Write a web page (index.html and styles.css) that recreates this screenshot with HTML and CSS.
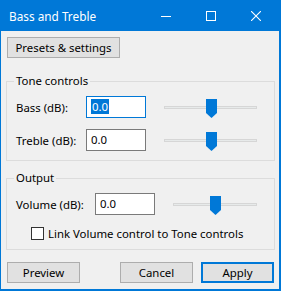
FILE: index.html
```html
<!DOCTYPE html>
<html lang="en">
<head>
  <meta charset="UTF-8" />
  <title>Bass and Treble</title>
  <link rel="stylesheet" href="styles.css">
</head>
<body>
  <div class="window">
    <div class="titlebar">
      <span class="title">Bass and Treble</span>
      <div class="caption">
        <span class="cap"><svg width="10" height="10" viewBox="0 0 10 10"><path d="M0 5.5H10" stroke="#fff" stroke-width="1"/></svg></span>
        <span class="cap"><svg width="10" height="10" viewBox="0 0 10 10"><rect x="0.5" y="0.5" width="9" height="9" fill="none" stroke="#fff" stroke-width="1"/></svg></span>
        <span class="cap close"><svg width="10" height="10" viewBox="0 0 10 10"><path d="M0 0L10 10M10 0L0 10" stroke="#fff" stroke-width="1.1"/></svg></span>
      </div>
    </div>

    <div class="content">
      <button class="btn presets">Presets &amp; settings</button>

      <fieldset class="group">
        <legend>Tone controls</legend>
        <div class="rows">
          <div class="row">
            <span class="lbl">Bass (dB):</span>
            <div class="field focused"><span class="sel">0.0</span></div>
            <div class="slider">
              <div class="track"></div>
              <svg class="thumb" width="11" height="19" viewBox="0 0 11 19"><polygon points="0,0 11,0 11,14 5.5,19 0,14" fill="#0078d7"/></svg>
            </div>
          </div>
          <div class="row">
            <span class="lbl">Treble (dB):</span>
            <div class="field">0.0</div>
            <div class="slider">
              <div class="track"></div>
              <svg class="thumb" width="11" height="19" viewBox="0 0 11 19"><polygon points="0,0 11,0 11,14 5.5,19 0,14" fill="#0078d7"/></svg>
            </div>
          </div>
        </div>
      </fieldset>

      <fieldset class="group output">
        <legend>Output</legend>
        <div class="rows">
          <div class="row">
            <span class="lbl wide">Volume (dB):</span>
            <div class="field">0.0</div>
            <div class="slider short">
              <div class="track"></div>
              <svg class="thumb" width="11" height="19" viewBox="0 0 11 19"><polygon points="0,0 11,0 11,14 5.5,19 0,14" fill="#0078d7"/></svg>
            </div>
          </div>
          <label class="check">
            <span class="box"></span>
            <span>Link Volume control to Tone controls</span>
          </label>
        </div>
      </fieldset>

      <div class="actions">
        <button class="btn">Preview</button>
        <button class="btn push">Cancel</button>
        <button class="btn default">Apply</button>
      </div>
    </div>
  </div>
</body>
</html>
```

FILE: styles.css
```css
/* Window frame */
* {
  box-sizing: border-box;
}

body {
  margin: 0;
  font-family: 'Noto Sans', sans-serif;
  font-size: 11.4px;
  color: #000;
}

.window {
  width: 281px;
  height: 291px;
  background: #f0f0f0;
  border-left: 1px solid #0078d7;
  border-right: 2px solid #0078d7;
  border-bottom: 2px solid #0078d7;
}

.titlebar {
  height: 31px;
  background: #0078d7;
  color: #fff;
  display: flex;
  align-items: center;
  padding-left: 8px;
}

.title {
  flex: 1;
  line-height: 16px;
  font-size: 11.8px;
}

.caption {
  display: flex;
  height: 100%;
}

.cap {
  width: 45px;
  display: flex;
  align-items: center;
  justify-content: center;
}

.cap svg {
  display: block;
}

.cap.close {
  width: 46px;
}

/* Dialog body */
.content {
  padding: 6px 4px 0 5px;
}

.btn {
  font-family: inherit;
  font-size: 11.4px;
  color: #000;
  background: #e1e1e1;
  border: 1px solid #adadad;
  height: 21px;
  width: 73px;
  padding: 0;
  margin: 0;
  line-height: 18px;
}

.presets {
  width: 113px;
  margin-left: 1px;
  display: block;
}

.group {
  margin: 15px 0 0;
  padding: 0;
  border: 1px solid #dcdcdc;
  min-width: 0;
}

.group.output {
  margin-top: 9px;
}

.group legend {
  margin-left: 7px;
  padding: 0 2px;
  line-height: 16px;
}

.rows {
  padding: 7px 0 9px 9px;
  display: flex;
  flex-direction: column;
  gap: 11px;
}

.row {
  display: flex;
  align-items: center;
  height: 22px;
}

.lbl {
  width: 70px;
}

.lbl.wide {
  width: 79px;
}

.field {
  width: 60px;
  height: 22px;
  background: #fff;
  border: 1px solid #7a7a7a;
  padding-left: 4px;
  line-height: 20px;
}

.field.focused {
  border-color: #0078d7;
}

.sel {
  background: #0078d7;
  color: #fff;
  padding: 0 1px;
}

/* Trackbar */
.slider {
  position: relative;
  width: 93px;
  height: 22px;
  margin-left: 18px;
}

.slider.short {
  width: 84px;
}

.track {
  position: absolute;
  left: 0;
  right: 0;
  top: 10px;
  height: 3px;
  background: #e7eaea;
  border: 1px solid #d6d6d6;
}

.thumb {
  position: absolute;
  top: 3px;
  left: 50%;
  margin-left: -5px;
  display: block;
}

.check {
  display: flex;
  align-items: center;
  margin-left: 15px;
  height: 13px;
  margin-top: 1px;
}

.box {
  width: 13px;
  height: 13px;
  background: #fff;
  border: 1px solid #333;
  margin-right: 4px;
}

.actions {
  display: flex;
  margin: 12px 1px 0;
}

.push {
  margin-left: auto;
  margin-right: 8px;
}

.default {
  border: 2px solid #0078d7;
}
```
